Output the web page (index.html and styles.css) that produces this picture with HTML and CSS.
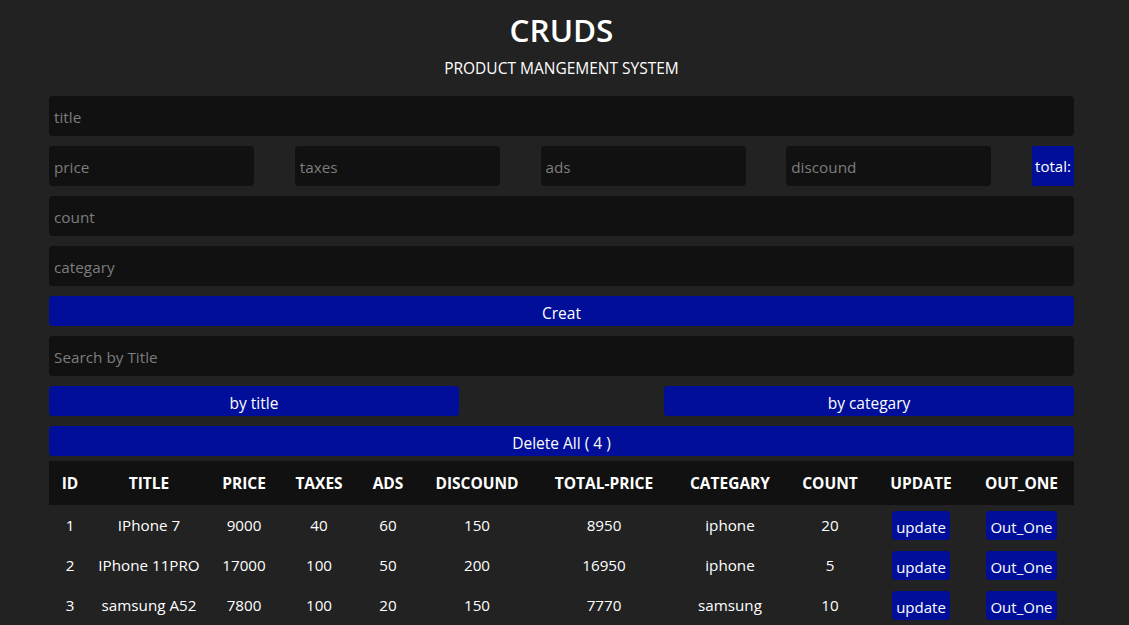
FILE: index.html
```html
<!DOCTYPE html>
<html>
<head>
<meta charset="utf-8">
<title>CRUDS</title>
<link rel="stylesheet" href="styles.css">
</head>
<body>
<div class="crud">
  <div class="head">
    <h2>CRUDS</h2>
    <p>PRODUCT MANGEMENT SYSTEM</p>
  </div>
  <div class="inputs">
    <input type="text" placeholder="title">
    <div class="price">
      <input type="number" placeholder="price">
      <input type="number" placeholder="taxes">
      <input type="number" placeholder="ads">
      <input type="number" placeholder="discound">
      <small class="total">total:</small>
    </div>
    <input type="number" placeholder="count">
    <input type="text" placeholder="categary">
    <button class="btn creat">Creat</button>
  </div>
  <div class="outputs">
    <input type="text" placeholder="Search by Title">
    <div class="btn-search">
      <button class="btn">by title</button>
      <button class="btn">by categary</button>
    </div>
    <button class="btn">Delete All ( 4 )</button>
    <table>
      <colgroup>
        <col class="c1"><col class="c2"><col class="c3"><col class="c4"><col class="c5"><col class="c6"><col class="c7"><col class="c8"><col class="c9"><col class="c10"><col class="c11">
      </colgroup>
      <thead>
        <tr>
          <th>ID</th><th>TITLE</th><th>PRICE</th><th>TAXES</th><th>ADS</th><th>DISCOUND</th><th>TOTAL-PRICE</th><th>CATEGARY</th><th>COUNT</th><th>UPDATE</th><th>OUT_ONE</th>
        </tr>
      </thead>
      <tbody>
        <tr>
          <td>1</td><td>IPhone 7</td><td>9000</td><td>40</td><td>60</td><td>150</td><td>8950</td><td>iphone</td><td>20</td>
          <td><button class="cell-btn">update</button></td><td><button class="cell-btn">Out_One</button></td>
        </tr>
        <tr>
          <td>2</td><td>IPhone 11PRO</td><td>17000</td><td>100</td><td>50</td><td>200</td><td>16950</td><td>iphone</td><td>5</td>
          <td><button class="cell-btn">update</button></td><td><button class="cell-btn">Out_One</button></td>
        </tr>
        <tr>
          <td>3</td><td>samsung A52</td><td>7800</td><td>100</td><td>20</td><td>150</td><td>7770</td><td>samsung</td><td>10</td>
          <td><button class="cell-btn">update</button></td><td><button class="cell-btn">Out_One</button></td>
        </tr>
      </tbody>
    </table>
  </div>
</div>
</body>
</html>
```
FILE: styles.css
```css
* {
  box-sizing: border-box;
  margin: 0;
  padding: 0;
}

body {
  background: #222222;
  color: #ffffff;
  font-family: "Open Sans", "Noto Sans", sans-serif;
  overflow: hidden;
}

.crud {
  width: 1025px;
  margin-left: 49px;
}

.head {
  text-align: center;
  padding-top: 9px;
}

.head h2 {
  font-size: 31.5px;
  font-weight: 600;
  line-height: 42px;
}

.head p {
  font-size: 15.5px;
  line-height: 20px;
  margin-top: 7px;
}

.inputs {
  margin-top: 18px;
  display: flex;
  flex-direction: column;
  gap: 10px;
}

input {
  width: 100%;
  height: 40px;
  background: #111111;
  border: none;
  outline: none;
  border-radius: 4px;
  padding: 2px 5px 0;
  color: #ffffff;
  font-family: inherit;
  font-size: 15.3px;
}

input::placeholder {
  color: #7d7d7d;
}

.price {
  display: flex;
  align-items: center;
  justify-content: space-between;
}

.price input {
  width: 205px;
  flex: none;
}

.total {
  flex: none;
  width: 42px;
  height: 40px;
  background: #000e99;
  display: flex;
  align-items: center;
  justify-content: center;
  font-size: 15px;
}

.btn {
  width: 100%;
  height: 30px;
  border: none;
  border-radius: 4px;
  background: #000e99;
  color: #ffffff;
  font-family: inherit;
  font-size: 15.5px;
  padding-top: 3px;
  cursor: pointer;
}

.outputs {
  margin-top: 10px;
  display: flex;
  flex-direction: column;
  gap: 10px;
}

.btn-search {
  display: flex;
  justify-content: space-between;
}

.btn-search .btn {
  width: 410px;
}

table {
  width: 100%;
  border-collapse: collapse;
  table-layout: fixed;
  margin-top: -5px;
  text-align: center;
}

.c1 { width: 42px; }
.c2 { width: 116px; }
.c3 { width: 74px; }
.c4 { width: 76px; }
.c5 { width: 62px; }
.c6 { width: 116px; }
.c7 { width: 138px; }
.c8 { width: 114px; }
.c9 { width: 86px; }
.c10 { width: 96px; }
.c11 { width: 105px; }

thead {
  background: #111111;
}

th {
  height: 44px;
  font-size: 15.5px;
  font-weight: 700;
  text-transform: uppercase;
}

td {
  height: 40px;
  font-size: 15.2px;
}

.cell-btn {
  height: 29px;
  padding: 4px 4px 0;
  border: none;
  border-radius: 4px;
  background: #000e99;
  color: #ffffff;
  font-family: inherit;
  font-size: 15px;
  cursor: pointer;
}
```
